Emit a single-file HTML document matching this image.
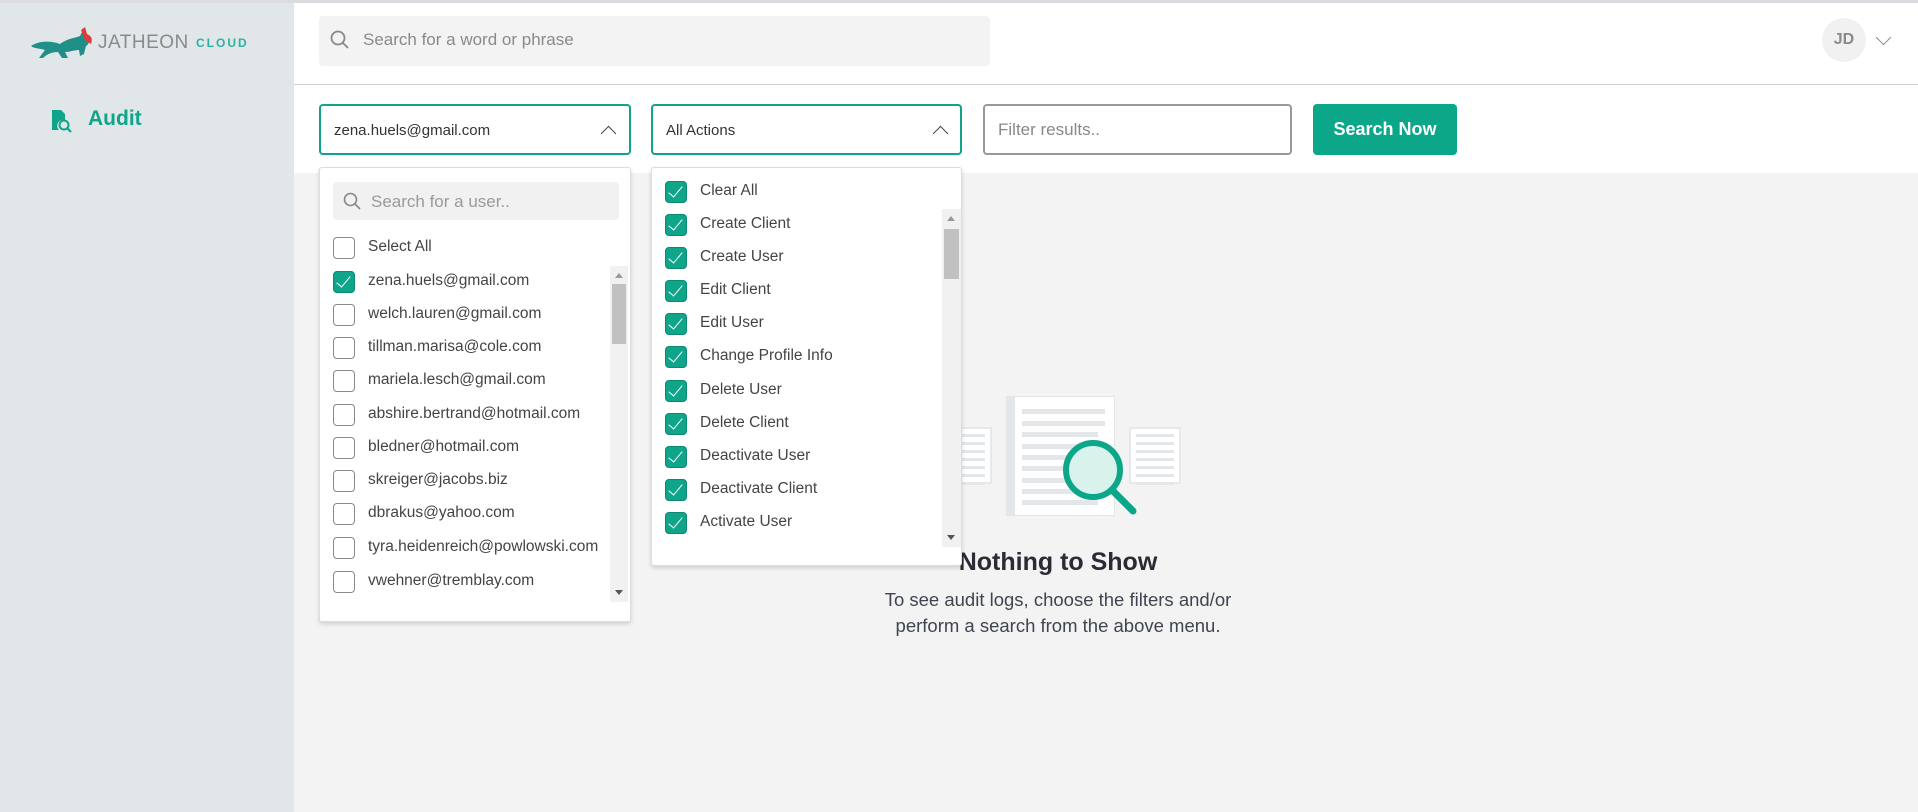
<!DOCTYPE html>
<html><head><meta charset="utf-8"><style>
*{box-sizing:border-box;margin:0;padding:0}
body{width:1918px;height:812px;overflow:hidden;background:#f3f3f3;font-family:"Liberation Sans",sans-serif;position:relative}
.abs{position:absolute}
.side{left:0;top:0;width:294px;height:812px;background:#e1e6e9;border-top:3px solid #dcdce0}
.hdr{left:294px;top:0;width:1624px;height:85px;background:#fff;border-top:3px solid #dcdce0;border-bottom:1px solid #d2d2d2}
.bar{left:294px;top:85px;width:1624px;height:88px;background:#fff}
.sel{height:51px;border:2px solid #0fa58a;border-radius:4px;background:#fff;font-size:15px;color:#333;padding:16px 13px}
.panel{background:#fff;border:1px solid #ddd;border-radius:3px;box-shadow:0 2px 4px rgba(0,0,0,.15)}
.row{position:absolute;left:0;height:24px;font-size:15.5px;color:#444;white-space:nowrap}
.cb{position:absolute;width:22px;height:22px;border:1.5px solid #888;border-radius:4px;background:#fff}
.cb.on{background:#0fa58a;border-color:#0b8a72}
.cb.on::after{content:"";position:absolute;left:6px;top:1px;width:6px;height:13px;border:solid #fff;border-width:0 1.8px 1.8px 0;transform:rotate(40deg)}
.lbl{position:absolute;left:35px;top:1px}
.sb{background:#f1f1f1}
.thumb{position:absolute;left:2px;right:2px;background:#c1c1c1}
.arr{position:absolute;left:5px;width:0;height:0;border-left:4px solid transparent;border-right:4px solid transparent}
.chev{position:absolute;width:11px;height:11px;border:solid #444;border-width:1.5px 0 0 1.5px;transform:rotate(45deg)}
.doc{background:#fff;border:2px solid #e6e8ea}
.doc i{display:block;height:3px;background:#e4e7ea;margin:5px 5px 0 5px}
</style></head><body>
<div class="abs side"></div>
<svg class="abs" style="left:30px;top:26px" width="64" height="34" viewBox="0 0 64 34">
<path d="M1 20 C10 14 22 15 30 18 C38 12 46 12 50 10 L53 4 L56 10 C60 12 60 18 56 20 L54 28 L50 30 L49 24 C44 24 40 26 35 26 L38 32 L32 32 L28 26 C22 26 17 28 13 32 L9 32 L15 24 C9 22 5 23 1 20 Z" fill="#1f8f87"/>
<path d="M51 4 L55 1 L57 8 C61 10 63 12 61 18 L55 14 Z" fill="#e03a3a"/>
</svg>
<div class="abs" style="left:98px;top:32px;font-size:19px;letter-spacing:0.5px;color:#8a8a8a">JATHEON</div>
<div class="abs" style="left:196px;top:36px;font-size:12px;letter-spacing:2px;color:#2ab3a3;font-weight:bold">CLOUD</div>
<svg class="abs" style="left:51px;top:109px" width="22" height="24" viewBox="0 0 22 24"><path d="M1 1h9l4 4v6a6 6 0 0 0-6 10H1z" fill="#0fa58a"/><circle cx="13" cy="16" r="4.5" fill="none" stroke="#0fa58a" stroke-width="2"/><path d="M16 19l4 4" stroke="#0fa58a" stroke-width="2.2"/></svg>
<div class="abs" style="left:88px;top:107px;font-size:21px;font-weight:bold;color:#0fa58a">Audit</div>

<div class="abs hdr"></div>
<div class="abs" style="left:319px;top:16px;width:671px;height:50px;background:#f3f3f3;border-radius:4px"></div>
<svg class="abs" style="left:330px;top:30px" width="20" height="20" viewBox="0 0 20 20"><circle cx="8" cy="8" r="6.5" fill="none" stroke="#888" stroke-width="1.8"/><path d="M13 13l5 5" stroke="#888" stroke-width="1.8"/></svg>
<div class="abs" style="left:363px;top:30px;font-size:17px;color:#8a8a8a">Search for a word or phrase</div>
<div class="abs" style="left:1822px;top:18px;width:44px;height:44px;border-radius:50%;background:#f1f1f1;font-size:16px;font-weight:bold;color:#8a8a8a;text-align:center;line-height:44px">JD</div>
<div class="chev" style="left:1878px;top:32px;transform:rotate(225deg);border-color:#888"></div>

<div class="abs bar"></div>
<div class="abs sel" style="left:319px;top:104px;width:312px">zena.huels@gmail.com<div class="chev" style="left:282px;top:22px"></div></div>
<div class="abs sel" style="left:651px;top:104px;width:311px">All Actions<div class="chev" style="left:282px;top:22px"></div></div>
<div class="abs" style="left:983px;top:104px;width:309px;height:51px;border:2px solid #999;border-radius:4px;background:#fff;font-size:17px;color:#888;padding:14px 13px">Filter results..</div>
<div class="abs" style="left:1313px;top:104px;width:144px;height:51px;background:#0ca789;border-radius:4px;color:#fff;font-size:18px;font-weight:bold;text-align:center;line-height:51px">Search Now</div>

<div class="abs doc" style="left:940px;top:427px;width:52px;height:57px"><i></i><i></i><i></i><i></i><i></i><i></i><i></i></div>
<div class="abs doc" style="left:1129px;top:427px;width:52px;height:57px"><i></i><i></i><i></i><i></i><i></i><i></i><i></i></div>
<svg class="abs" style="left:1006px;top:396px" width="140" height="125" viewBox="0 0 140 125">
<rect x="0" y="0" width="109" height="120" fill="#e4e7ea"/><rect x="9" y="1" width="99" height="118" fill="#fff"/>
<g fill="#e4e7ea"><rect x="16" y="13" width="83" height="5"/><rect x="16" y="25" width="83" height="5"/><rect x="16" y="36" width="76" height="5"/><rect x="16" y="48" width="83" height="5"/><rect x="16" y="59" width="83" height="5"/><rect x="16" y="70" width="83" height="5"/><rect x="16" y="82" width="83" height="5"/><rect x="16" y="93" width="83" height="5"/><rect x="16" y="104" width="76" height="5"/></g>
<circle cx="87" cy="74" r="27" fill="#d9f3ec" stroke="#0ca789" stroke-width="6"/>
<path d="M106 94l21 21" stroke="#0ca789" stroke-width="7" stroke-linecap="round"/>
</svg>
<div class="abs" style="left:858px;top:548px;width:400px;text-align:center;font-size:25px;font-weight:bold;color:#2b2b35">Nothing to Show</div>
<div class="abs" style="left:808px;top:587px;width:500px;text-align:center;font-size:18.5px;line-height:26px;color:#3f4550">To see audit logs, choose the filters and/or<br>perform a search from the above menu.</div>

<div class="abs panel" style="left:319px;top:167px;width:312px;height:455px;overflow:hidden">
<div class="abs" style="left:13px;top:14px;width:286px;height:38px;background:#f1f1f1;border-radius:4px"></div>
<svg class="abs" style="left:23px;top:24px" width="18" height="18" viewBox="0 0 18 18"><circle cx="7.5" cy="7.5" r="6" fill="none" stroke="#888" stroke-width="1.6"/><path d="M12 12l5 5" stroke="#888" stroke-width="1.6"/></svg>
<div class="abs" style="left:51px;top:24px;font-size:17px;color:#9a9a9a">Search for a user..</div>
<div class="row" style="top:69px;left:13px"><div class="cb"></div><div class="lbl">Select All</div></div>
<div class="abs" style="left:0;top:99px;width:288px;height:340px;overflow:hidden">
<div class="row" style="top:4px;left:13px"><div class="cb on"></div><div class="lbl">zena.huels@gmail.com</div></div>
<div class="row" style="top:37px;left:13px"><div class="cb"></div><div class="lbl">welch.lauren@gmail.com</div></div>
<div class="row" style="top:70px;left:13px"><div class="cb"></div><div class="lbl">tillman.marisa@cole.com</div></div>
<div class="row" style="top:103px;left:13px"><div class="cb"></div><div class="lbl">mariela.lesch@gmail.com</div></div>
<div class="row" style="top:137px;left:13px"><div class="cb"></div><div class="lbl">abshire.bertrand@hotmail.com</div></div>
<div class="row" style="top:170px;left:13px"><div class="cb"></div><div class="lbl">bledner@hotmail.com</div></div>
<div class="row" style="top:203px;left:13px"><div class="cb"></div><div class="lbl">skreiger@jacobs.biz</div></div>
<div class="row" style="top:236px;left:13px"><div class="cb"></div><div class="lbl">dbrakus@yahoo.com</div></div>
<div class="row" style="top:270px;left:13px"><div class="cb"></div><div class="lbl">tyra.heidenreich@powlowski.com</div></div>
<div class="row" style="top:304px;left:13px"><div class="cb"></div><div class="lbl">vwehner@tremblay.com</div></div>
</div>
<div class="abs sb" style="left:290px;top:98px;width:18px;height:336px"><div class="arr" style="top:7px;border-bottom:5px solid #999"></div><div class="thumb" style="top:18px;height:60px"></div><div class="arr" style="bottom:7px;border-top:5px solid #555"></div></div>
</div>

<div class="abs panel" style="left:651px;top:167px;width:311px;height:399px;overflow:hidden">
<div class="abs sb" style="left:290px;top:41px;width:19px;height:338px"><div class="arr" style="top:7px;border-bottom:5px solid #999"></div><div class="thumb" style="top:20px;height:50px"></div><div class="arr" style="bottom:7px;border-top:5px solid #555"></div></div>
<div class="row" style="top:13px;left:13px"><div class="cb on"></div><div class="lbl">Clear All</div></div>
<div class="row" style="top:46px;left:13px"><div class="cb on"></div><div class="lbl">Create Client</div></div>
<div class="row" style="top:79px;left:13px"><div class="cb on"></div><div class="lbl">Create User</div></div>
<div class="row" style="top:112px;left:13px"><div class="cb on"></div><div class="lbl">Edit Client</div></div>
<div class="row" style="top:145px;left:13px"><div class="cb on"></div><div class="lbl">Edit User</div></div>
<div class="row" style="top:178px;left:13px"><div class="cb on"></div><div class="lbl">Change Profile Info</div></div>
<div class="row" style="top:212px;left:13px"><div class="cb on"></div><div class="lbl">Delete User</div></div>
<div class="row" style="top:245px;left:13px"><div class="cb on"></div><div class="lbl">Delete Client</div></div>
<div class="row" style="top:278px;left:13px"><div class="cb on"></div><div class="lbl">Deactivate User</div></div>
<div class="row" style="top:311px;left:13px"><div class="cb on"></div><div class="lbl">Deactivate Client</div></div>
<div class="row" style="top:344px;left:13px"><div class="cb on"></div><div class="lbl">Activate User</div></div>
</div>
</body></html>
